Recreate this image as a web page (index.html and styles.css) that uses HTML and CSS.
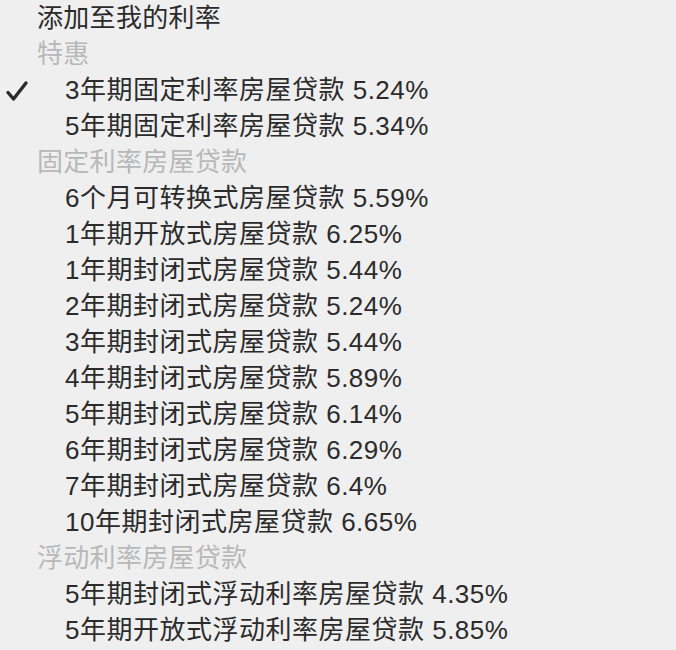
FILE: index.html
```html
<!DOCTYPE html>
<html lang="zh-CN">
<head>
  <meta charset="UTF-8">
  <title>利率</title>
  <link rel="stylesheet" href="styles.css">
</head>
<body>
  <ul class="menu">
    <li class="item top">添加至我的利率</li>
    <li class="group">特惠</li>
    <li class="item checked">
      <svg class="check" width="24" height="24" viewBox="0 0 24 24"><path d="M3 13.5 L8.5 20 L21 4" fill="none" stroke="#2b2b2b" stroke-width="3.4" stroke-linecap="round" stroke-linejoin="round"/></svg>
      3年期固定利率房屋贷款 5.24%
    </li>
    <li class="item">5年期固定利率房屋贷款 5.34%</li>
    <li class="group">固定利率房屋贷款</li>
    <li class="item">6个月可转换式房屋贷款 5.59%</li>
    <li class="item">1年期开放式房屋贷款 6.25%</li>
    <li class="item">1年期封闭式房屋贷款 5.44%</li>
    <li class="item">2年期封闭式房屋贷款 5.24%</li>
    <li class="item">3年期封闭式房屋贷款 5.44%</li>
    <li class="item">4年期封闭式房屋贷款 5.89%</li>
    <li class="item">5年期封闭式房屋贷款 6.14%</li>
    <li class="item">6年期封闭式房屋贷款 6.29%</li>
    <li class="item">7年期封闭式房屋贷款 6.4%</li>
    <li class="item">10年期封闭式房屋贷款 6.65%</li>
    <li class="group">浮动利率房屋贷款</li>
    <li class="item">5年期封闭式浮动利率房屋贷款 4.35%</li>
    <li class="item">5年期开放式浮动利率房屋贷款 5.85%</li>
  </ul>
</body>
</html>
```

FILE: styles.css
```css
body {
  margin: 0;
  background: #efefef;
  font-family: "Liberation Sans", "Noto Sans CJK SC", sans-serif;
  font-size: 26px;
  letter-spacing: 0.5px;
  color: #2b2b2b;
}
.menu {
  list-style: none;
  margin: 0;
  padding: 0;
}
.menu li {
  height: 36px;
  line-height: 36px;
  white-space: nowrap;
  position: relative;
}
.item {
  padding-left: 65px;
}
.item.top,
.group {
  padding-left: 37px;
  letter-spacing: 0.3px;
}
.group {
  color: #b8b8b8;
}
.check {
  position: absolute;
  left: 5px;
  top: 7px;
}
```
